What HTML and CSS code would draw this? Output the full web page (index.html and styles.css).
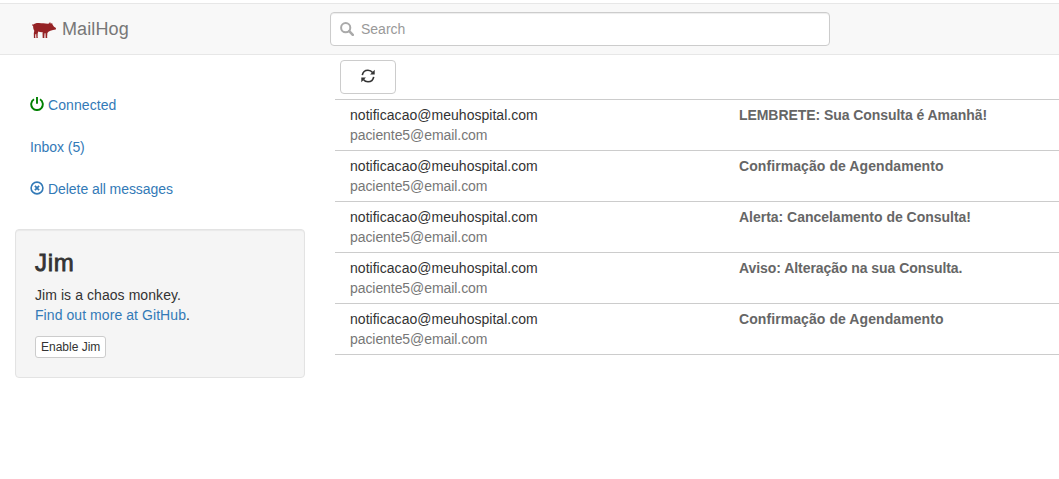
FILE: index.html
```html
<!DOCTYPE html>
<html lang="en">
<head>
<meta charset="utf-8">
<title>MailHog</title>
<link rel="stylesheet" href="styles.css">
</head>
<body>
<nav class="navbar">
  <a class="brand">
    <svg class="brand-logo" viewBox="0 0 24 16" width="24" height="16"><path d="M0 2.300 1 2.800C2.400 1.400 4.500 1 7 1.100c3 .1 5.500.6 8.700.6l1.300-.3L18 0l.9 1.700 1.200-.7.500 1.800L22 4.800l2 1.200-.2 1.500-2.800.4-2.600.9-1.900 1-1.100 1.200-.3 4.300.3.700h-1.800l-.1-4.700h-.9l-.3 4.100.3.600h-1.900L10.500 10.100C9 10.300 7.500 9.800 6.300 9.500L5.700 11.500l-.1 3.800.4.700H4.400L4.200 11.700 3.300 12.600l-.1 2.700.4.700H1.900L1.800 11.300l.5-2.500C1.500 7.500 1 5.500 1.100 3.700L.1 3.400Z"/></svg>
    <span class="brand-name">MailHog</span>
  </a>
  <label class="search">
    <svg class="search-icon" viewBox="0 0 14 14" width="14" height="14"><circle cx="5.700" cy="5.700" r="4.600" fill="none" stroke-width="2"/><path d="m9.200 9.200 3.600 3.600" stroke-width="2.600" stroke-linecap="round"/></svg>
    <input class="search-input" type="text" placeholder="Search">
  </label>
</nav>
<div class="layout">
  <aside class="sidebar">
    <ul class="nav">
      <li class="nav-item"><svg class="icon power" viewBox="0 0 14 14" width="14" height="14"><path d="M4 2.300A5.800 5.800 0 1 0 10 2.300M7 0v6.800" fill="none" stroke-width="1.900"/></svg><a class="wide">Connected</a></li>
      <li class="nav-item"><a class="narrow">Inbox (5)</a></li>
      <li class="nav-item"><svg class="icon remove" viewBox="0 0 14 14" width="14" height="14"><circle cx="7" cy="7" r="5.900" fill="none" stroke-width="1.600"/><path d="m4.900 4.900 4.200 4.200m0-4.200L4.900 9.100" stroke-width="1.800"/></svg><a class="narrow">Delete all messages</a></li>
    </ul>
    <section class="well">
      <h3 class="well-title">Jim</h3>
      <p class="well-text">Jim is a chaos monkey.<br><a>Find out more at GitHub</a>.</p>
      <button class="btn-small">Enable Jim</button>
    </section>
  </aside>
  <main class="content">
    <div class="toolbar">
      <button class="btn-refresh" aria-label="Refresh"><svg viewBox="0 0 14 14" width="14" height="14"><path d="M1.300 6.200C1.800 3.100 4.400 1.300 7 1.300c1.900 0 3.500.8 4.600 2.200M12.700 7.800C12.200 10.900 9.600 12.700 7 12.700c-1.900 0-3.500-.8-4.600-2.200" fill="none" stroke="#333" stroke-width="1.600"/><path d="M13.700.8v4.600H9.100zM.3 13.200V8.600h4.600z" fill="#333"/></svg></button>
    </div>
    <div class="messages">
      <div class="message"><div class="sender">notificacao@meuhospital.com<div class="recipient">paciente5@email.com</div></div><div class="subject narrow">LEMBRETE: Sua Consulta é Amanhã!</div></div>
      <div class="message"><div class="sender">notificacao@meuhospital.com<div class="recipient">paciente5@email.com</div></div><div class="subject wide">Confirmação de Agendamento</div></div>
      <div class="message"><div class="sender">notificacao@meuhospital.com<div class="recipient">paciente5@email.com</div></div><div class="subject">Alerta: Cancelamento de Consulta!</div></div>
      <div class="message"><div class="sender">notificacao@meuhospital.com<div class="recipient">paciente5@email.com</div></div><div class="subject narrow">Aviso: Alteração na sua Consulta.</div></div>
      <div class="message"><div class="sender">notificacao@meuhospital.com<div class="recipient">paciente5@email.com</div></div><div class="subject wide">Confirmação de Agendamento</div></div>
    </div>
  </main>
</div>
</body>
</html>
```

FILE: styles.css
```css
* { box-sizing: border-box; }
body {
  margin: 0;
  padding-top: 3px;
  overflow: hidden;
  background: #fff;
  color: #333;
  font: 14px/20px "Liberation Sans", Arial, sans-serif;
}
a { color: #337ab7; }
button { font-family: inherit; color: #333; background: #fff; border: 1px solid #ccc; }
.navbar {
  display: flex;
  height: 52px;
  padding-left: 32px;
  background: #f8f8f8;
  border: solid #e7e7e7;
  border-width: 1px 0;
}
.brand { display: flex; width: 298px; padding-top: 15px; color: #777; font-size: 18px; letter-spacing: .12px; }
.brand-logo { margin: 3px 6px 0 0; fill: #952225; }
.search {
  display: flex;
  width: 500px;
  height: 34px;
  margin-top: 8px;
  padding: 0 9px;
  background: #fff;
  border: 1px solid #ccc;
  border-radius: 4px;
  box-shadow: inset 0 1px 1px rgba(0, 0, 0, .075);
}
.search-icon { margin: 9px 7px 0 0; stroke: #aaa; }
.search-input { flex: 1; padding: 0; border: 0; background: transparent; font: inherit; outline: 0; }
.search-input::placeholder { color: #999; }
.layout { display: flex; }
.sidebar { flex: none; width: 320px; padding: 30px 15px 0; }
.nav { margin: 0 0 20px; padding: 0; list-style: none; }
.nav-item { display: flex; height: 40px; padding: 10px 15px; }
.nav-item + .nav-item { margin-top: 2px; }
.icon { margin: 2px 4px 0 0; }
.power { stroke: #008000; }
.remove { stroke: #337ab7; }
.well {
  height: 149px;
  padding: 20px 19px 19px;
  background: #f5f5f5;
  border: 1px solid #e3e3e3;
  border-radius: 4px;
  box-shadow: inset 0 1px 1px rgba(0, 0, 0, .05);
}
.well-title { margin: 0 0 9px; font-size: 24px; font-weight: normal; line-height: 26px; letter-spacing: .7px; -webkit-text-stroke: .8px #333; }
.well-text { margin: 0 0 11px; letter-spacing: .07px; }
.btn-small { display: block; height: 22px; padding: 0 5px; border-radius: 3px; font-size: 12px; line-height: 18px; }
.content { flex: 1; padding-left: 15px; }
.toolbar { padding: 5px; }
.btn-refresh { display: flex; align-items: center; justify-content: center; width: 56px; height: 34px; padding: 0 0 2px; border-radius: 4px; }
.messages { border-top: 1px solid #ccc; }
.message { display: flex; height: 51px; padding: 5px 0 0 15px; border-bottom: 1px solid #ccc; }
.sender { width: 389px; color: #333; letter-spacing: .03px; }
.recipient { color: #777; letter-spacing: -.07px; }
.subject { color: #666; font-weight: bold; white-space: nowrap; letter-spacing: -.02px; }
.wide { letter-spacing: .08px; }
.narrow { letter-spacing: -.06px; }
```
